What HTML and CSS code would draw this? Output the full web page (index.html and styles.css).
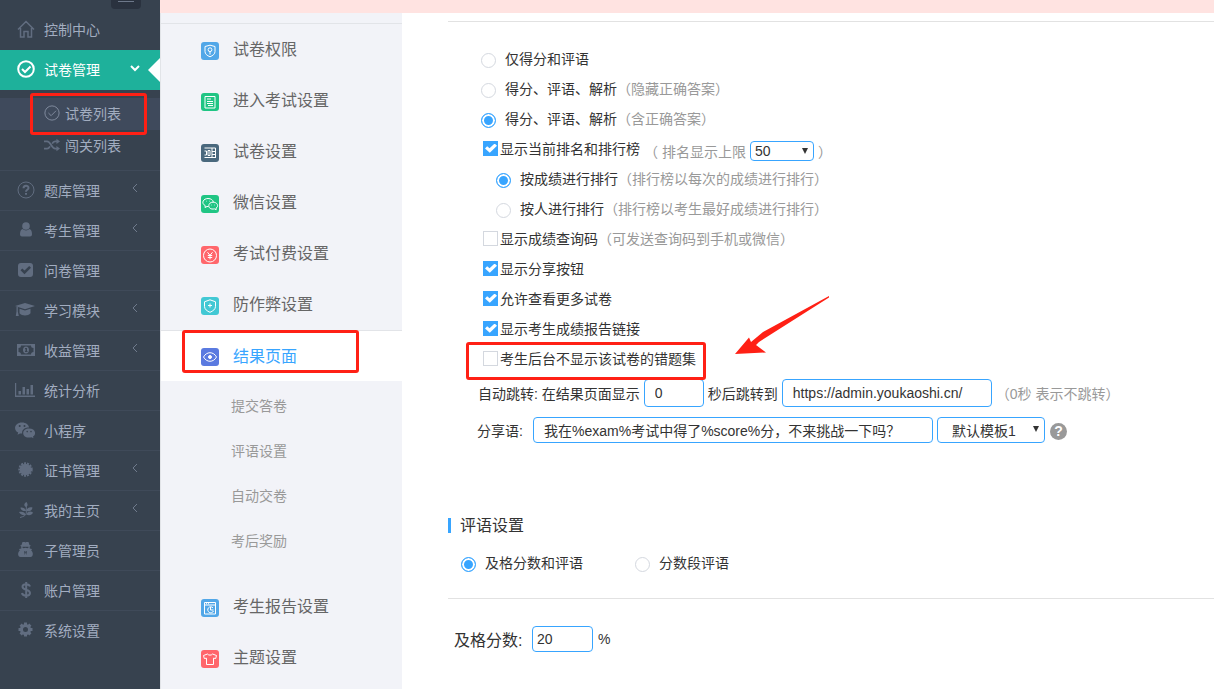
FILE: index.html
```html
<!DOCTYPE html>
<html lang="zh-CN">
<head>
  <meta charset="UTF-8">
  <meta name="viewport" content="width=device-width, initial-scale=1.0">
  <title>结果页面</title>
  <link rel="stylesheet" href="styles.css">
</head>
<body>
  <nav class="sidebar">
    <button class="sidebar-toggle" aria-label="收起菜单"></button>
    <ul class="menu">
      <li><a href="#"><svg class="icon" viewBox="0 0 18 18"><path class="line home" d="M1 9.500 9 1.500l8 8M3.500 8v9H7v-5.500h4V17h3.500V8"/></svg><span>控制中心</span></a></li>
      <li class="active">
        <a href="#"><svg class="icon" viewBox="0 0 18 18"><circle class="line bold" cx="9" cy="9" r="7.800"/><path class="line bold" d="m5 9 3 3 5.500-5.500"/></svg><span>试卷管理</span><svg class="chevron" viewBox="0 0 10 10"><path d="m1 3 4 4 4-4"/></svg></a>
        <ul class="submenu">
          <li class="current"><a href="#"><svg class="icon" viewBox="0 0 18 18"><circle class="line" cx="9" cy="9" r="8"/><path class="line" d="m5 9 3 3 5.500-5.500"/></svg><span>试卷列表</span></a></li>
          <li><a href="#"><svg class="icon" viewBox="0 0 18 18"><path class="line bold" d="M0 5h3.500c4 0 5 8 9 8H15M0 13h3.500c1.500 0 2.500-1 3.300-2.500M9.200 7.500C10 6 11 5 12.500 5H15"/><path d="M14 2v6l4-3zM14 10v6l4-3z"/></svg><span>闯关列表</span></a></li>
        </ul>
      </li>
      <li><a href="#"><svg class="icon" viewBox="0 0 18 18"><circle class="line" cx="9" cy="9" r="8"/><path class="line bold" d="M6.500 7.300c0-3.300 5-3.300 5-.3 0 1.800-2.500 1.800-2.500 3.700M9 12v1.800"/></svg><span>题库管理</span><svg class="chevron" viewBox="0 0 10 10"><path d="M7 1 3 5l4 4"/></svg></a></li>
      <li><a href="#"><svg class="icon" viewBox="0 0 18 18"><circle cx="9" cy="5" r="3.800"/><path d="M5.500 8Q9 10.800 12.500 8C14.500 8.500 15 11 15 13.500q0 2-2 2H5q-2 0-2-2C3 11 3.500 8.500 5.500 8z"/></svg><span>考生管理</span><svg class="chevron" viewBox="0 0 10 10"><path d="M7 1 3 5l4 4"/></svg></a></li>
      <li><a href="#"><svg class="icon" viewBox="0 0 18 18"><path fill-rule="evenodd" d="M4 2h9q3 0 3 3v8q0 3-3 3H4q-3 0-3-3V5q0-3 3-3zm3.500 11.200L14 6.700l-1.800-1.800-4.700 4.700L5.300 7.400 3.500 9.200z"/></svg><span>问卷管理</span></a></li>
      <li><a href="#"><svg class="icon wide" viewBox="0 0 20 18"><path d="M10 2 0 5l10 3.200L20 5zM4.500 7.700v4.500c2.500 3 8.500 3 11 0V7.700L10 9.500zM1.500 6v4.500L.8 15h3l-1-4.500V6z"/></svg><span>学习模块</span><svg class="chevron" viewBox="0 0 10 10"><path d="M7 1 3 5l4 4"/></svg></a></li>
      <li><a href="#"><svg class="icon" viewBox="0 0 18 18"><path fill-rule="evenodd" d="M0 3h18v12H0zm4 1.500q0 2.500-2.500 2.500v4q2.500 0 2.500 2.500h10q0-2.500 2.500-2.500V7Q14 7 14 4.500z"/><path fill-rule="evenodd" d="M9 5.500c4 0 4 7 0 7s-4-7 0-7zM8 7v1h.5v2H8v1h2.500v-1H10V7z"/></svg><span>收益管理</span><svg class="chevron" viewBox="0 0 10 10"><path d="M7 1 3 5l4 4"/></svg></a></li>
      <li><a href="#"><svg class="icon wide" viewBox="0 0 20 18"><path d="M0 2h1.200v12.500H20V16H0zM3.500 10H6v3.500H3.500zM7.500 6H10v7.500H7.500zM11.500 8H14v5.500h-2.500zM15.500 4H18v9.500h-2.500z"/></svg><span>统计分析</span></a></li>
      <li><a href="#"><svg class="icon wide" viewBox="0 0 20 18"><path fill-rule="evenodd" d="M7 1.500c4 0 6.800 2.200 7 5-4-.3-7.500 2.500-6.800 6H5l-2.500 1.300.7-2.200C-2.500 8.500 0 1.500 7 1.500zM4.700 4a1 1 0 1 0 0 2 1 1 0 0 0 0-2zm4.800 0a1 1 0 1 0 0 2 1 1 0 0 0 0-2z"/><path fill-rule="evenodd" d="M14 7.500c6.500 0 7.800 6 4 8l.5 1.700-2-1C11 17.500 8.200 15 8.200 12c0-2.500 2.500-4.500 5.800-4.500zM12.200 9.800a.8.8 0 1 0 0 1.600.8.8 0 0 0 0-1.600zm3.800 0a.8.8 0 1 0 0 1.600.8.8 0 0 0 0-1.600z"/></svg><span>小程序</span></a></li>
      <li><a href="#"><svg class="icon" viewBox="0 0 18 18"><circle cx="8.500" cy="8.500" r="5.800"/><circle class="line bold dotted" cx="8.500" cy="8.500" r="6.200"/></svg><span>证书管理</span><svg class="chevron" viewBox="0 0 10 10"><path d="M7 1 3 5l4 4"/></svg></a></li>
      <li><a href="#"><svg class="icon" viewBox="0 0 18 18"><path d="M9 6C6 4.500 7.500 2 9.500 1c1.500 2 1.500 4-.5 5zM9 10C6 10.500 3.500 9 3.500 6.500 6.500 6 8.500 7.500 9 10zM9.500 10c0-2.500 2.500-4.500 6-3.500-.5 3-3 4.500-6 3.500zM9 14c-3.500.5-6-.5-7-3 3-1 6 0 7 3zM9.500 13.500c.5-2.500 3.500-4 6.500-2-1 2.500-4 3.500-6.500 2z"/><path class="line" d="M9.300 3v9q0 3-6.300 4.500"/></svg><span>我的主页</span><svg class="chevron" viewBox="0 0 10 10"><path d="M7 1 3 5l4 4"/></svg></a></li>
      <li><a href="#"><svg class="icon" viewBox="0 0 18 18"><path fill-rule="evenodd" d="M5.500 1h2.200l.8.6.8-.6h2.200l1 3 1.500.7-1.300.8v2l2.300.5-.8 1.500C16.500 11 16.500 16 13.500 16h-10C.5 16 .5 11 2.800 9.500L2 8l2.300-.5v-2L3 4.700 4.500 4zM5.500 5.800v1l1.200.5 1.800-.5 1.800.5 1.200-.5v-1zM7 10l.8 4 .7-3 .7 3 .8-4-1.500.8z"/></svg><span>子管理员</span></a></li>
      <li><a href="#"><svg class="icon" viewBox="0 0 18 18"><path class="line bold" d="M13 5.500C12 2.500 5.500 2.500 5.500 5.800 5.500 9.500 13 8 13 12c0 3.500-7.500 3.500-8 0M9.200 1v16"/></svg><span>账户管理</span></a></li>
      <li><a href="#"><svg class="icon" viewBox="0 0 18 18"><circle class="line gear" cx="8.500" cy="8.500" r="4"/><path class="line teeth" d="M8.500 1.500v3M8.500 12.500v3M1.500 8.500h3M12.500 8.500h3M3.600 3.600l2 2M11.400 11.400l2 2M3.600 13.400l2-2M11.400 5.600l2-2"/></svg><span>系统设置</span></a></li>
    </ul>
    <span class="mark mark-menu"></span>
  </nav>

  <div class="page">
    <div class="notice"></div>
    <div class="columns">
      <nav class="settings">
        <ul>
          <li><a href="#"><svg class="tile blue" viewBox="0 0 18 18"><path d="M9 3.200 14 4.500v5c0 2.500-2 4-5 5.300-3-1.300-5-2.800-5-5.300v-5z"/><circle cx="9" cy="7.700" r="1.900"/><path d="M9 9.600v3"/></svg>试卷权限</a></li>
          <li><a href="#"><svg class="tile green" viewBox="0 0 18 18"><path d="M4 3.500h10v11.500H4zM6 6h4M6 8.500h6M6 10.500h6M7 12.500h5"/></svg>进入考试设置</a></li>
          <li><a href="#"><svg class="tile slate" viewBox="0 0 18 18"><path d="M3.500 4h11v10M3.500 7h2v4h-2M7 6.500h2v5H7zM11 4v10M11 7.500h3.500M11 10.500h3.500M3.500 13.500h11"/></svg>试卷设置</a></li>
          <li><a href="#"><svg class="tile green" viewBox="0 0 18 18"><path d="M7.500 11.500H6l-2 1 .3-1.800C-.5 8 2.500 3.500 7 3.500c3 0 5 1.500 5.300 3.500"/><path d="M12 7.200c5 0 5.800 4.600 3 6l.2 1.500-1.700-.8c-4 .7-5.700-1-5.700-3.200C7.800 8.600 9.500 7.200 12 7.200zM5 6.200h.5M8.500 6.200H9M10.300 10h.5M13.300 10h.5"/></svg>微信设置</a></li>
          <li><a href="#"><svg class="tile red" viewBox="0 0 18 18"><circle cx="9" cy="9.500" r="6.500"/><path d="m6.500 6.300 2.500 3 2.500-3M9 9.300v4M6.800 9.500h4.400M6.800 11.500h4.400"/></svg>考试付费设置</a></li>
          <li><a href="#"><svg class="tile cyan" viewBox="0 0 18 18"><path d="m9 2.800 5.500 2v4.500c0 3-2.500 4.700-5.500 6-3-1.300-5.500-3-5.500-6V4.800zM9 6.500v4M7 8.500h4"/></svg>防作弊设置</a></li>
          <li class="current"><a href="#"><svg class="tile indigo" viewBox="0 0 18 18"><path d="M2.500 9c3-5.700 10-5.700 13 0-3 5.700-10 5.700-13 0z"/><circle class="pupil" cx="9" cy="9" r="1.500"/></svg>结果页面</a>
            <ul>
              <li><a href="#">提交答卷</a></li>
              <li><a href="#">评语设置</a></li>
              <li><a href="#">自动交卷</a></li>
              <li><a href="#">考后奖励</a></li>
            </ul>
          </li>
          <li><a href="#"><svg class="tile blue" viewBox="0 0 18 18"><path d="M3.500 3.500h11v11.500h-11zM3.500 6h11M5 4.700h1M7 4.700h1M9.500 8v3h3"/><path d="M12 8.800a3 3 0 1 0 .5 3.200"/></svg>考生报告设置</a></li>
          <li><a href="#"><svg class="tile red" viewBox="0 0 18 18"><path d="M6.500 4c1 1.500 4 1.500 5 0l4 1.500-.8 3-2.200-.3V14.500h-7V8.200l-2.200.3-.8-3z"/></svg>主题设置</a></li>
        </ul>
        <span class="mark mark-result"></span>
      </nav>

      <main class="content">
        <form>
          <div class="options">
            <div class="row"><label><input type="radio" name="show">仅得分和评语</label></div>
            <div class="row"><label><input type="radio" name="show">得分、评语、解析<span class="hint">（隐藏正确答案）</span></label></div>
            <div class="row"><label><input type="radio" name="show" checked>得分、评语、解析<span class="hint">（含正确答案）</span></label></div>
            <div class="row">
              <label><input type="checkbox" checked>显示当前排名和排行榜</label>
              <div class="hint limit">
                <label for="limit">（ 排名显示上限</label>
                <span class="select small"><select id="limit"><option>50</option></select></span>
                <span>）</span>
              </div>
            </div>
            <div class="row nested"><label><input type="radio" name="rank" checked>按成绩进行排行<span class="hint">（排行榜以每次的成绩进行排行）</span></label></div>
            <div class="row nested"><label><input type="radio" name="rank">按人进行排行<span class="hint">（排行榜以考生最好成绩进行排行）</span></label></div>
            <div class="row"><label><input type="checkbox">显示成绩查询码<span class="hint">（可发送查询码到手机或微信）</span></label></div>
            <div class="row"><label><input type="checkbox" checked>显示分享按钮</label></div>
            <div class="row"><label><input type="checkbox" checked>允许查看更多试卷</label></div>
            <div class="row"><label><input type="checkbox" checked>显示考生成绩报告链接</label></div>
            <div class="row"><label><input type="checkbox">考生后台不显示该试卷的错题集</label></div>
          </div>

          <div class="jump">
            <label for="seconds">自动跳转: 在结果页面显示</label>
            <input type="text" id="seconds" class="seconds" value="0">
            <label for="url">秒后跳转到</label>
            <input type="text" id="url" class="url" value="https://admin.youkaoshi.cn/">
            <span class="hint">（0秒 表示不跳转）</span>
          </div>
          <div class="share">
            <label for="share">分享语:</label>
            <input type="text" id="share" value="我在%exam%考试中得了%score%分，不来挑战一下吗？">
            <span class="select"><select aria-label="模板"><option>默认模板1</option></select></span>
            <button type="button" class="help">?</button>
          </div>

          <h2>评语设置</h2>
          <div class="comment-type">
            <label><input type="radio" name="comment" checked>及格分数和评语</label>
            <label><input type="radio" name="comment">分数段评语</label>
          </div>
          <div class="pass">
            <label for="pass">及格分数:</label>
            <input type="text" id="pass" value="20">
            <span>%</span>
          </div>
        </form>
        <span class="mark mark-option"></span>
        <svg class="arrow" viewBox="0 0 96 60"><path d="M94 0v1.500L24 46l-3 3 10 7.500L0 58 14 41.500l2 4.500L28 36z"/></svg>
      </main>
    </div>
  </div>
</body>
</html>
```
FILE: styles.css
```css
* {
  box-sizing: border-box;
}
body {
  display: flex;
  min-height: 100vh;
  margin: 0;
  font-family: "Liberation Sans", "Noto Sans CJK SC", sans-serif;
  font-size: 14px;
  color: #333;
  background: #fff;
  overflow: hidden;
}
ul {
  list-style: none;
  margin: 0;
  padding: 0;
}
a {
  color: inherit;
  text-decoration: none;
}
input, select, button {
  font: inherit;
  color: inherit;
}

/* left menu */
.sidebar {
  position: relative;
  flex: 0 0 160px;
  padding-top: 10px;
  background: #37424f;
  color: #a2adc0;
}
.sidebar-toggle {
  position: absolute;
  top: 0;
  right: 19px;
  width: 30px;
  height: 9px;
  padding: 0 0 6px;
  border: 0;
  border-radius: 0 0 4px 4px;
  background: #2a323f;
}
.sidebar-toggle::before {
  content: "";
  display: block;
  width: 16px;
  height: 1px;
  margin: 0 auto;
  background: #6d788a;
}
.menu > li > a {
  position: relative;
  display: flex;
  align-items: center;
  height: 40px;
  padding: 0 20px 2px 17px;
}
.menu > li + li > a {
  border-top: 1px solid #3f4a59;
}
.icon {
  flex: none;
  width: 18px;
  height: 18px;
  margin-right: 9px;
  fill: #616d80;
}
.icon.wide {
  width: 20px;
  margin-left: -2px;
}
.line {
  fill: none;
  stroke: #616d80;
}
.bold {
  stroke-width: 2;
}
.home {
  stroke-width: 1.5;
}
.dotted {
  stroke-dasharray: 2 1;
}
.gear {
  stroke-width: 3;
}
.teeth {
  stroke-width: 3;
}
.chevron {
  width: 10px;
  height: 10px;
  margin: 0 0 3px auto;
  fill: none;
  stroke: #707b8d;
}
.menu > .active > a {
  border-top: 0;
  background: #1eb19b;
  color: #fff;
}
.menu > .active > a::after {
  content: "";
  position: absolute;
  top: 8px;
  right: 0;
  border: 12px solid transparent;
  border-right-color: #fff;
  border-left: 0;
}
.active > a .line {
  stroke: #fff;
}
.active > a .chevron {
  stroke: #fff;
  stroke-width: 2;
}
.submenu {
  padding: 8px 0;
}
.submenu a {
  display: flex;
  align-items: center;
  height: 32px;
  padding: 0 0 3px 44px;
}
.submenu .icon {
  width: 16px;
  height: 16px;
  margin-right: 5px;
}
.submenu .current {
  background: #3f4a5c;
}
.submenu .current .line {
  stroke: #8792a5;
}

/* page */
.page {
  flex: 1;
  display: flex;
  flex-direction: column;
}
.notice {
  height: 13px;
  background: #ffe3e1;
}
.columns {
  flex: 1;
  display: flex;
}
.settings {
  position: relative;
  flex: 0 0 242px;
  padding-top: 10px;
  border-left: 1px solid #e2e4e8;
  background: #f2f3f8;
  color: #666;
  font-size: 16px;
}
.settings > ul {
  border-top: 1px solid #e2e4e8;
}
.settings > ul > li > a {
  display: flex;
  align-items: center;
  height: 51px;
  padding: 0 0 3px 40px;
}
.settings > ul > .current > a {
  border-top: 1px solid #e2e4e8;
  background: #fff;
  color: #38a5ff;
}
.settings ul ul {
  padding: 1px 0 19px;
  color: #999;
  font-size: 14px;
}
.settings ul ul a {
  display: flex;
  align-items: center;
  height: 45px;
  padding-left: 70px;
}
.tile {
  width: 18px;
  height: 18px;
  margin: 5px 14px 0 0;
  border-radius: 3px;
  fill: none;
  stroke: #fff;
}
.blue { background: #52a7e8; }
.green { background: #20c584; }
.slate { background: #4a687d; }
.red { background: #ff666b; }
.cyan { background: #42c8d4; }
.indigo { background: #5a7ae0; }
.pupil { fill: #fff; }

.content {
  position: relative;
  flex: 1;
  padding: 8px 0 0 46px;
}
.content form {
  border-top: 1px solid #e2e2e2;
}
.options {
  padding: 21px 0 2px 35px;
}
.row {
  display: flex;
  align-items: center;
  height: 30px;
}
.row.nested {
  padding-left: 13px;
}
.row label, .comment-type label {
  display: flex;
  align-items: center;
}
.hint {
  color: #999;
}
.limit {
  display: flex;
  align-items: center;
  gap: 4px;
  padding: 6px 0 0 4px;
}
input[type="radio"], input[type="checkbox"] {
  appearance: none;
  width: 15px;
  height: 15px;
  border: 1px solid #d4d8df;
  background: #fff;
}
input[type="radio"] {
  margin: 5px 9px 0 0;
  border-radius: 50%;
}
.options input[type="radio"] {
  margin-left: -2px;
}
.options .nested input[type="radio"] {
  margin-left: 0;
}
input[type="radio"]:checked {
  border-color: #38a5ff;
  background: #38a5ff;
  box-shadow: inset 0 0 0 2px #fff;
}
input[type="checkbox"] {
  margin: 0 2px 0 0;
}
input[type="checkbox"]:checked {
  border-color: #38a5ff;
  background: #38a5ff;
}
input[type="checkbox"]:checked::before {
  content: "";
  display: block;
  width: 12px;
  height: 10px;
  margin: 2px 0 0 1px;
  background: #fff;
  clip-path: polygon(0 50%, 18% 28%, 38% 48%, 80% 0, 100% 22%, 40% 92%);
}
input[type="text"], select {
  border: 1px solid #38a5ff;
  border-radius: 4px;
  background: #fff;
}
.select {
  position: relative;
  color: #333;
}
.select::after {
  content: "";
  position: absolute;
  top: 9px;
  right: 6px;
  border: 3px solid transparent;
  border-top: 6px solid #333;
  border-bottom: 0;
  pointer-events: none;
}
select {
  display: block;
  appearance: none;
  width: 108px;
  height: 26px;
  padding: 2px 14px 0;
}
.small select {
  width: 64px;
  height: 20px;
  padding: 0 4px;
}
.small::after {
  top: 7px;
}
.jump {
  display: flex;
  align-items: center;
  gap: 4px;
  padding: 4px 0 0 30px;
}
.jump input {
  height: 28px;
  padding: 0 10px;
}
.jump .seconds {
  width: 60px;
}
.jump .url {
  width: 210px;
}
.share {
  display: flex;
  align-items: center;
  gap: 4px;
  padding: 10px 0 0 29px;
}
.share label {
  width: 52px;
}
.share input {
  width: 400px;
  height: 26px;
  padding: 0 10px;
}
.help {
  width: 17px;
  height: 17px;
  margin: 3px 0 0 1px;
  padding: 0;
  border: 0;
  border-radius: 50%;
  background: #999;
  color: #fff;
  font-size: 14px;
  font-weight: bold;
  line-height: 17px;
}
h2 {
  margin: 75px 0 0;
  padding-left: 9px;
  border-left: 3px solid #38a5ff;
  font-size: 16px;
  font-weight: 400;
  line-height: 15px;
}
.comment-type {
  display: flex;
  gap: 52px;
  padding: 19px 0 26px 13px;
  border-bottom: 1px solid #e2e2e2;
}
.pass {
  display: flex;
  align-items: center;
  gap: 5px;
  padding: 27px 0 0 6px;
}
.pass label {
  width: 73px;
  font-size: 16px;
}
.pass input {
  width: 61px;
  height: 26px;
  padding: 0 4px;
}

/* red marks */
.mark {
  position: absolute;
  border: 3px solid #ff2015;
  border-radius: 3px;
}
.mark-menu {
  top: 93px;
  left: 30px;
  width: 117px;
  height: 42px;
}
.mark-result {
  top: 317px;
  left: 21px;
  width: 177px;
  height: 43px;
}
.mark-option {
  top: 329px;
  left: 64px;
  width: 240px;
  height: 38px;
}
.arrow {
  position: absolute;
  top: 283px;
  left: 333px;
  width: 96px;
  height: 60px;
  fill: #ff2015;
}
```
